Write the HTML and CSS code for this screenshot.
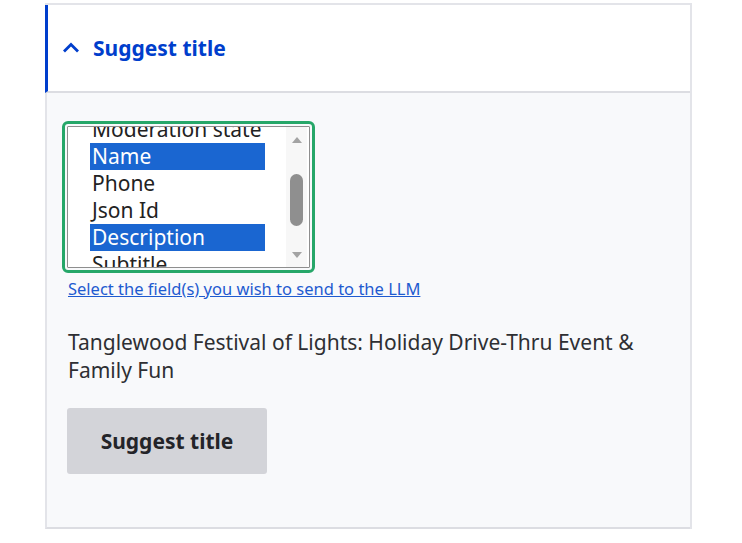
FILE: index.html
```html
<!DOCTYPE html>
<html lang="en">
<head>
<meta charset="utf-8">
<title>Suggest title</title>
<link rel="stylesheet" href="styles.css">
</head>
<body>
<div class="page">
  <div class="panel">
    <div class="panel-header">
      <svg class="chevron" width="18" height="11" viewBox="0 0 18 11"><path d="M2 9.5 L9 2.5 L16 9.5" fill="none" stroke="#003ecc" stroke-width="2.8"/></svg>
      <span class="panel-title">Suggest title</span>
    </div>
    <div class="panel-body">
      <div class="field">
        <div class="listbox">
          <ul class="options">
            <li class="option">Moderation state</li>
            <li class="option selected">Name</li>
            <li class="option">Phone</li>
            <li class="option">Json Id</li>
            <li class="option selected">Description</li>
            <li class="option">Subtitle</li>
          </ul>
          <div class="scrollbar">
            <svg class="arrow" width="12" height="8" viewBox="0 0 12 8"><path d="M1 7 L6 1 L11 7 Z" fill="#a3a3a3"/></svg>
            <div class="track"><div class="thumb"></div></div>
            <svg class="arrow" width="12" height="8" viewBox="0 0 12 8"><path d="M1 1 L6 7 L11 1 Z" fill="#a3a3a3"/></svg>
          </div>
        </div>
        <a class="help" href="#">Select the field(s) you wish to send to the LLM</a>
      </div>
      <p class="suggestion">Tanglewood Festival of Lights: Holiday Drive-Thru Event &amp; Family Fun</p>
      <button class="btn" type="button">Suggest title</button>
    </div>
  </div>
</div>
</body>
</html>
```
FILE: styles.css
```css
html, body {
  margin: 0;
  padding: 0;
  background: #ffffff;
}
body {
  font-family: "Noto Sans", "Open Sans", sans-serif;
  color: #2e2f33;
}
.page {
  padding: 3px 0 0 45px;
}
.panel {
  width: 647px;
  border-top: 2px solid #e3e4e9;
  border-right: 2px solid #e3e4e9;
  box-sizing: border-box;
  display: flex;
  flex-direction: column;
}
.panel-header {
  height: 86px;
  background: #ffffff;
  border-left: 3px solid #003ecc;
  border-bottom: 2px solid #dcdde2;
  display: flex;
  align-items: center;
  padding-left: 14px;
  box-sizing: content-box;
}
.chevron {
  margin-right: 13px;
  margin-top: -1px;
}
.panel-title {
  font-size: 21px;
  line-height: 28px;
  font-weight: 700;
  color: #003ecc;
  letter-spacing: 0;
}
.panel-body {
  background: #f8f9fb;
  border-left: 2px solid #e3e4e9;
  border-bottom: 2px solid #dcdde2;
  padding: 33px 20px 53px 20px;
}
.field {
  display: flex;
  flex-direction: column;
  align-items: flex-start;
}
.listbox {
  width: 243px;
  height: 142px;
  box-sizing: border-box;
  border: 1px solid #8e8e8e;
  background: #ffffff;
  outline: 3px solid #26a769;
  outline-offset: 2px;
  border-radius: 1px;
  display: flex;
  overflow: hidden;
}
.options {
  list-style: none;
  margin: -11px 0 0 0;
  padding: 0 0 0 22px;
  flex: 1;
}
.option {
  height: 27px;
  line-height: 27px;
  font-size: 21px;
  padding-left: 2px;
  width: 173px;
  color: #222222;
  white-space: nowrap;
}
.option.selected {
  background: #1a66d1;
  color: #ffffff;
}
.scrollbar {
  width: 21px;
  margin-right: 2px;
  background: #f7f7f7;
  display: flex;
  flex-direction: column;
  align-items: center;
  padding: 9px 0 8px 0;
}
.track {
  flex: 1;
  display: flex;
  flex-direction: column;
  width: 100%;
  align-items: center;
  padding-top: 30px;
}
.thumb {
  width: 13px;
  height: 52px;
  border-radius: 7px;
  background: #8f8f8f;
}
.help {
  margin-top: 9px;
  font-size: 16.5px;
  color: #1f5bd0;
  text-decoration: underline;
  line-height: 23px;
  margin-left: 1px;
}
.suggestion {
  margin: 28px 0 0 1px;
  font-size: 21px;
  line-height: 28px;
  color: #2e2f33;
  max-width: 600px;
}
.btn {
  margin-top: 24px;
  width: 200px;
  height: 66px;
  border: none;
  border-radius: 3px;
  background: #d3d4d9;
  font-family: "Noto Sans", "Open Sans", sans-serif;
  font-size: 21px;
  font-weight: 700;
  color: #232429;
}
```
